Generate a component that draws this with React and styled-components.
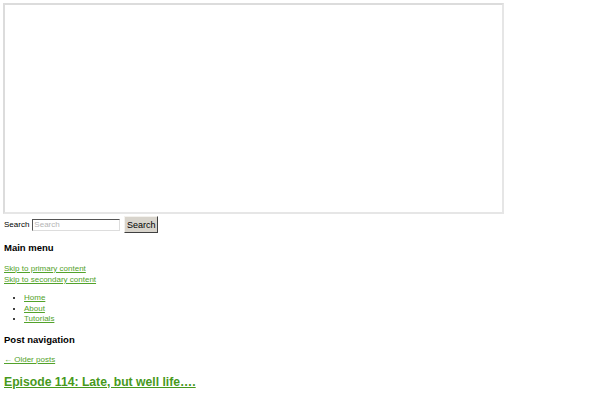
import React from "react";
import styled, { createGlobalStyle } from "styled-components";

const GlobalStyle = createGlobalStyle`
  body {
    margin: 0;
    padding: 3px;
    background: #fff;
    color: #000;
    font-family: "Liberation Sans", Arial, sans-serif;
  }
`;

const Page = styled.div`
  display: flex;
  flex-direction: column;
  align-items: flex-start;
`;

const Frame = styled.div`
  width: 497px;
  height: 207px;
  border: 2px solid #e6e6e6;
  border-top-color: #dcdcdc;
  border-left-color: #dcdcdc;
  background: #fff;
`;

const SearchForm = styled.form`
  display: flex;
  align-items: center;
  gap: 4px;
  margin-top: 2px;
  font-size: 8px;
`;

const SearchLabel = styled.label`
  padding-left: 1px;
  margin-right: -1px;
`;

const SearchInput = styled.input`
  width: 84px;
  height: 10px;
  padding: 0 1px;
  font-family: "Liberation Sans", Arial, sans-serif;
  font-size: 8px;
  border: 1px solid;
  border-color: #555 #ddd #ddd #555;
  outline: none;

  &::placeholder {
    color: #b5b5b5;
  }
`;

const SearchButton = styled.button`
  height: 17px;
  width: 34px;
  padding: 0;
  font-family: "Liberation Sans", Arial, sans-serif;
  font-size: 9px;
  color: #000;
  background: #d8d4cc;
  border: 1px solid;
  border-color: #f4f2ee #404040 #404040 #f4f2ee;
`;

const Heading = styled.h3`
  margin: 9px 0 0;
  padding-left: 1px;
  font-size: 9.5px;
  font-weight: bold;
  line-height: 12px;
`;

const LinkStack = styled.div`
  display: flex;
  flex-direction: column;
  margin-top: ${(p) => p.$top || "9px"};
  padding-left: 1px;
  line-height: 11px;
`;

const Link = styled.a`
  color: #52a22a;
  font-size: 8px;
  text-decoration: underline;
`;

const MenuList = styled.ul`
  margin: 8px 0 0;
  padding-left: 21px;
  list-style: disc;
  font-size: 8px;
  line-height: 10.5px;
`;

const PostTitle = styled.h2`
  margin: 10px 0 0;
  padding-left: 1px;
  font-size: 12.2px;
  line-height: 15px;
  font-weight: bold;

  a {
    color: #47991c;
    text-decoration: underline;
  }
`;

const App = () => {
  return (
    <Page>
      <GlobalStyle />
      <Frame />
      <SearchForm onSubmit={(e) => e.preventDefault()}>
        <SearchLabel htmlFor="s">Search</SearchLabel>
        <SearchInput id="s" type="text" placeholder="Search" />
        <SearchButton type="submit">Search</SearchButton>
      </SearchForm>

      <Heading>Main menu</Heading>
      <LinkStack>
        <Link href="#content">Skip to primary content</Link>
        <Link href="#secondary">Skip to secondary content</Link>
      </LinkStack>
      <MenuList>
        <li><Link href="#">Home</Link></li>
        <li><Link href="#">About</Link></li>
        <li><Link href="#">Tutorials</Link></li>
      </MenuList>

      <Heading>Post navigation</Heading>
      <LinkStack $top="8px">
        <Link href="#">← Older posts</Link>
      </LinkStack>
      <PostTitle>
        <a href="#">Episode 114: Late, but well life….</a>
      </PostTitle>
    </Page>
  );
};

export default App;
